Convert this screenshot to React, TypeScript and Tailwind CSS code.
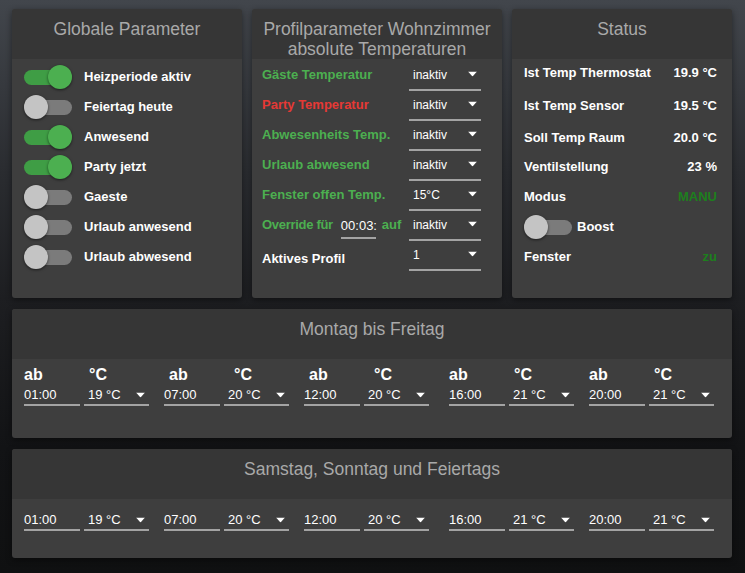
import React from "react";

const FONT = { fontFamily: '"Liberation Sans", Arial, sans-serif' };

function Toggle({ on }: { on: boolean }) {
  return (
    <div className="relative w-[48px] h-[24px] flex items-center shrink-0">
      <div className={on ? "w-[48px] h-[15px] rounded-full bg-[#3f9d45]" : "w-[48px] h-[15px] rounded-full bg-[#7b7b7b]"} />
      <div
        className={
          on
            ? "absolute top-0 left-[24px] w-[24px] h-[24px] rounded-full bg-[#4caf50] shadow-[0_1px_3px_rgba(0,0,0,0.55)]"
            : "absolute top-0 left-0 w-[24px] h-[24px] rounded-full bg-[#c4c4c4] shadow-[0_1px_3px_rgba(0,0,0,0.55)]"
        }
      />
    </div>
  );
}

function Arrow() {
  return (
    <svg width="9" height="5" viewBox="0 0 9 5" className="absolute right-[4px] top-1/2 -translate-y-1/2">
      <path d="M0 0H9L4.5 5Z" fill="#ffffff" />
    </svg>
  );
}

function Card({ title, children, className }: { title: React.ReactNode; children: React.ReactNode; className: string }) {
  return (
    <div className={"flex flex-col rounded-[3px] overflow-hidden bg-[#3e3e3e] shadow-[0_2px_6px_rgba(0,0,0,0.45)] " + className}>
      <div className="h-[50px] shrink-0 bg-[#363636] text-center text-[17.5px] leading-[20px] pt-[10px] text-[#a9a9a9]">
        {title}
      </div>
      <div className="flex-1">{children}</div>
    </div>
  );
}

const globals: [string, boolean][] = [
  ["Heizperiode aktiv", true],
  ["Feiertag heute", false],
  ["Anwesend", true],
  ["Party jetzt", true],
  ["Gaeste", false],
  ["Urlaub anwesend", false],
  ["Urlaub abwesend", false],
];

function ProfileSelect({ value }: { value: string }) {
  return (
    <div className="relative w-[72px] h-[26px] border-b-2 border-[#a3a3a3] ml-auto pl-[4px] pt-[3px] text-[12px] leading-[14px] text-white">
      {value}
      <div className="absolute right-0 top-[2px] h-[14px] w-[14px]">
        <Arrow />
      </div>
    </div>
  );
}

const profileRows: { label: string; color: string; value: string }[] = [
  { label: "Gäste Temperatur", color: "text-[#4caf50]", value: "inaktiv" },
  { label: "Party Temperatur", color: "text-[#e53935]", value: "inaktiv" },
  { label: "Abwesenheits Temp.", color: "text-[#4caf50]", value: "inaktiv" },
  { label: "Urlaub abwesend", color: "text-[#4caf50]", value: "inaktiv" },
  { label: "Fenster offen Temp.", color: "text-[#4caf50]", value: "15°C" },
];

const schedule: { t: string; c: string; ml: string; ab: string; deg: string }[] = [
  { t: "01:00", c: "19 °C", ml: "ml-0", ab: "w-[60px]", deg: "pl-[5px]" },
  { t: "07:00", c: "20 °C", ml: "ml-[15px]", ab: "w-[60px] pl-[5px]", deg: "pl-[10px]" },
  { t: "12:00", c: "20 °C", ml: "ml-[15px]", ab: "w-[60px] pl-[5px]", deg: "pl-[10px]" },
  { t: "16:00", c: "21 °C", ml: "ml-[20px]", ab: "w-[60px]", deg: "pl-[5px]" },
  { t: "20:00", c: "21 °C", ml: "ml-[15px]", ab: "w-[60px]", deg: "pl-[5px]" },
];

function TimeInput({ v }: { v: string }) {
  return (
    <div className="w-[56px] h-[20px] border-b-2 border-[#a3a3a3] text-[13px] leading-[16px] pt-[1px] text-white">{v}</div>
  );
}

function TempSelect({ v }: { v: string }) {
  return (
    <div className="relative w-[65px] h-[20px] border-b-2 border-[#a3a3a3] text-[13px] leading-[16px] pt-[1px] pl-[4px] text-white">
      {v}
      <div className="absolute right-0 top-[1px] h-[16px] w-[14px]">
        <Arrow />
      </div>
    </div>
  );
}

function ScheduleRow({ labels }: { labels: boolean }) {
  return (
    <div className="flex pl-[12px]">
      {schedule.map((s, i) => (
        <div key={i} className={"flex flex-col " + s.ml}>
          {labels && (
            <div className="flex h-[18px] mb-[2px] text-[16px] leading-[18px] font-bold text-white">
              <div className={s.ab}>ab</div>
              <div className={s.deg}>°C</div>
            </div>
          )}
          <div className="flex gap-[4px]">
            <TimeInput v={s.t} />
            <TempSelect v={s.c} />
          </div>
        </div>
      ))}
    </div>
  );
}

export default function App() {
  return (
    <div
      style={FONT}
      className="w-[745px] h-[573px] overflow-hidden bg-[linear-gradient(180deg,#42464c_0%,#2a2c30_30%,#1d1e21_52%,#121315_78%,#0f1011_100%)] pl-[12px] pt-[9px]"
    >
      <div className="w-[720px] flex flex-col gap-[11px]">
        <div className="flex gap-[10px] h-[289px]">
          {/* Globale Parameter */}
          <Card title="Globale Parameter" className="w-[230px]">
            <div className="flex flex-col pt-[3px] pl-[12px]">
              {globals.map(([l, on]) => (
                <div key={l} className="h-[30px] flex items-center gap-[12px]">
                  <Toggle on={on} />
                  <span className="text-[13px] font-bold text-white leading-[16px]">{l}</span>
                </div>
              ))}
            </div>
          </Card>

          {/* Profilparameter */}
          <Card
            title={
              <>
                Profilparameter Wohnzimmer
                <br />
                absolute Temperaturen
              </>
            }
            className="w-[250px]"
          >
            <div className="flex flex-col pt-[4px] pl-[10px] pr-[21px]">
              {profileRows.map((r) => (
                <div key={r.label} className="h-[30px] flex items-start pt-[2px]">
                  <div className={"pt-[3px] text-[13px] font-bold leading-[14px] " + r.color}>{r.label}</div>
                  <ProfileSelect value={r.value} />
                </div>
              ))}
              <div className="h-[30px] flex items-start pt-[2px]">
                <div className="pt-[3px] text-[13px] font-bold leading-[14px] text-[#4caf50] tracking-[-0.3px]">Override für</div>
                <div className="ml-[8px] w-[35px] h-[24px] border-b-2 border-[#a3a3a3] pt-[4px] text-[13px] leading-[14px] text-white">
                  00:03:
                </div>
                <div className="ml-[6px] pt-[3px] text-[13px] font-bold leading-[14px] text-[#4caf50]">auf</div>
                <ProfileSelect value="inaktiv" />
              </div>
              <div className="h-[30px] flex items-start pt-[2px]">
                <div className="pt-[7px] text-[13px] font-bold leading-[14px] text-white">Aktives Profil</div>
                <ProfileSelect value="1" />
              </div>
            </div>
          </Card>

          {/* Status */}
          <Card title="Status" className="w-[220px]">
            <div className="flex flex-col pl-[12px] pr-[15px] text-[13px] font-bold leading-[16px] text-white">
              <div className="h-[28px] flex items-center justify-between">
                <span>Ist Temp Thermostat</span>
                <span>19.9 °C</span>
              </div>
              <div className="h-[38px] flex items-center justify-between">
                <span>Ist Temp Sensor</span>
                <span>19.5 °C</span>
              </div>
              <div className="h-[26px] flex items-center justify-between">
                <span>Soll Temp Raum</span>
                <span>20.0 °C</span>
              </div>
              <div className="h-[32px] flex items-center justify-between">
                <span>Ventilstellung</span>
                <span>23 %</span>
              </div>
              <div className="h-[28px] flex items-center justify-between">
                <span>Modus</span>
                <span className="text-[#1d7f1d]">MANU</span>
              </div>
              <div className="h-[32px] flex items-center gap-[5px]">
                <Toggle on={false} />
                <span>Boost</span>
              </div>
              <div className="h-[28px] flex items-center justify-between">
                <span>Fenster</span>
                <span className="text-[#1d7f1d]">zu</span>
              </div>
            </div>
          </Card>
        </div>

        <Card title="Montag bis Freitag" className="h-[129px]">
          <div className="pt-[7px]">
            <ScheduleRow labels={true} />
          </div>
        </Card>

        <Card title="Samstag, Sonntag und Feiertags" className="h-[109px]">
          <div className="pt-[12px]">
            <ScheduleRow labels={false} />
          </div>
        </Card>
      </div>
    </div>
  );
}
